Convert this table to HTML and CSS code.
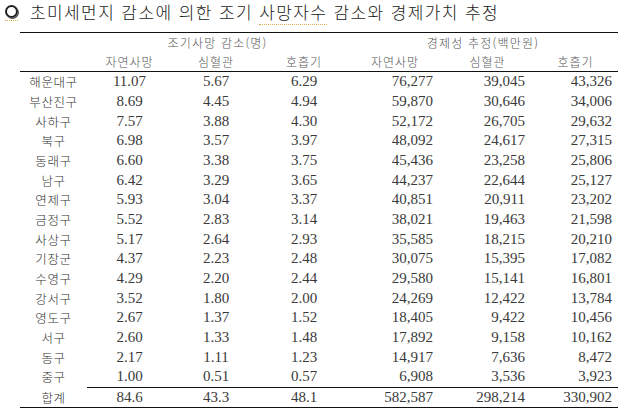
FILE: index.html
```html
<!DOCTYPE html>
<html lang="ko">
<head>
    <meta charset="UTF-8">
    <meta name="viewport" content="width=device-width, initial-scale=1.0">
    <title>초미세먼지 감소에 의한 조기 사망자수 감소와 경제가치 추정</title>
    <link rel="stylesheet" href="styles.css">
</head>
<body>
    <h1 class="title">
        <span class="bullet-wrap"><span class="bullet"></span></span>
        <span class="title-text">초미세먼지 감소에 의한 조기 <span class="spell">사망자수</span> 감소와 경제가치 추정</span>
    </h1>

    <table class="stats">
        <colgroup>
            <col class="c-name">
            <col class="c-1">
            <col class="c-2">
            <col class="c-3">
            <col class="c-4">
            <col class="c-5">
            <col class="c-6">
        </colgroup>
        <thead>
            <tr class="group">
                <th></th>
                <th colspan="3">조기사망 감소(명)</th>
                <th colspan="3">경제성 추정(백만원)</th>
            </tr>
            <tr class="sub">
                <th></th>
                <th>자연사망</th>
                <th>심혈관</th>
                <th>호흡기</th>
                <th>자연사망</th>
                <th>심혈관</th>
                <th>호흡기</th>
            </tr>
        </thead>
        <tbody>
            <tr><td>해운대구</td><td>11.07</td><td>5.67</td><td>6.29</td><td class="r4">76,277</td><td class="r5">39,045</td><td class="r6">43,326</td></tr>
            <tr><td>부산진구</td><td>8.69</td><td>4.45</td><td>4.94</td><td class="r4">59,870</td><td class="r5">30,646</td><td class="r6">34,006</td></tr>
            <tr><td>사하구</td><td>7.57</td><td>3.88</td><td>4.30</td><td class="r4">52,172</td><td class="r5">26,705</td><td class="r6">29,632</td></tr>
            <tr><td>북구</td><td>6.98</td><td>3.57</td><td>3.97</td><td class="r4">48,092</td><td class="r5">24,617</td><td class="r6">27,315</td></tr>
            <tr><td>동래구</td><td>6.60</td><td>3.38</td><td>3.75</td><td class="r4">45,436</td><td class="r5">23,258</td><td class="r6">25,806</td></tr>
            <tr><td>남구</td><td>6.42</td><td>3.29</td><td>3.65</td><td class="r4">44,237</td><td class="r5">22,644</td><td class="r6">25,127</td></tr>
            <tr><td>연제구</td><td>5.93</td><td>3.04</td><td>3.37</td><td class="r4">40,851</td><td class="r5">20,911</td><td class="r6">23,202</td></tr>
            <tr><td>금정구</td><td>5.52</td><td>2.83</td><td>3.14</td><td class="r4">38,021</td><td class="r5">19,463</td><td class="r6">21,598</td></tr>
            <tr><td>사상구</td><td>5.17</td><td>2.64</td><td>2.93</td><td class="r4">35,585</td><td class="r5">18,215</td><td class="r6">20,210</td></tr>
            <tr><td>기장군</td><td>4.37</td><td>2.23</td><td>2.48</td><td class="r4">30,075</td><td class="r5">15,395</td><td class="r6">17,082</td></tr>
            <tr><td>수영구</td><td>4.29</td><td>2.20</td><td>2.44</td><td class="r4">29,580</td><td class="r5">15,141</td><td class="r6">16,801</td></tr>
            <tr><td>강서구</td><td>3.52</td><td>1.80</td><td>2.00</td><td class="r4">24,269</td><td class="r5">12,422</td><td class="r6">13,784</td></tr>
            <tr><td>영도구</td><td>2.67</td><td>1.37</td><td>1.52</td><td class="r4">18,405</td><td class="r5">9,422</td><td class="r6">10,456</td></tr>
            <tr><td>서구</td><td>2.60</td><td>1.33</td><td>1.48</td><td class="r4">17,892</td><td class="r5">9,158</td><td class="r6">10,162</td></tr>
            <tr><td>동구</td><td>2.17</td><td>1.11</td><td>1.23</td><td class="r4">14,917</td><td class="r5">7,636</td><td class="r6">8,472</td></tr>
            <tr><td>중구</td><td>1.00</td><td>0.51</td><td>0.57</td><td class="r4">6,908</td><td class="r5">3,536</td><td class="r6">3,923</td></tr>
            <tr class="total"><td>합계</td><td>84.6</td><td>43.3</td><td>48.1</td><td class="r4">582,587</td><td class="r5">298,214</td><td class="r6">330,902</td></tr>
        </tbody>
    </table>
</body>
</html>
```

FILE: styles.css
```css
body {
    margin: 0;
    background: #fff;
    color: #222;
    font-family: "Noto Sans CJK KR", "Noto Sans", sans-serif;
}
.title {
    display: flex;
    align-items: center;
    height: 32px;
    margin: 0;
    padding-left: 5px;
    font-size: 17px;
    font-weight: 300;
    color: #1a1a1a;
    letter-spacing: 1.4px;
}
.bullet-wrap {
    display: flex;
    padding-bottom: 2px;
    margin-right: 12px;
    margin-top: -6px;
    border-bottom: 1px dotted #d9a848;
}
.bullet {
    width: 9px;
    height: 9px;
    border: 2px solid #222;
    border-radius: 50%;
    box-shadow: 1px 1px 0 #555;
}
.title-text {
    margin-top: -9px;
}
.spell {
    border-bottom: 1px dotted #d9a848;
}
.stats {
    margin-left: 20px;
    width: 598px;
    table-layout: fixed;
    border-collapse: collapse;
    border-top: 1px solid #111;
}
.c-name { width: 67px; }
.c-1 { width: 85px; }
.c-2 { width: 88px; }
.c-3 { width: 88px; }
.c-4 { width: 94px; }
.c-5 { width: 91px; }
.c-6 { width: 85px; }
th {
    height: 19px;
    padding: 0;
    font-weight: 300;
    font-size: 12px;
    color: #555;
    text-align: center;
    letter-spacing: 1px;
}
.group th {
    letter-spacing: 1.2px;
}
.sub th {
    border-bottom: 1px solid #111;
}
td {
    height: 19.67px;
    padding: 0;
    text-align: center;
    font-family: "Liberation Serif", serif;
    font-size: 15px;
    color: #3a3a3a;
    line-height: 19px;
}
td:first-child {
    font-family: "Noto Sans CJK KR", sans-serif;
    font-weight: 300;
    font-size: 12.5px;
    letter-spacing: 0.6px;
    color: #333;
}
.r4, .r5, .r6 {
    text-align: right;
}
.r4 { padding-right: 9px; }
.r5 { padding-right: 8px; }
.r6 { padding-right: 6px; }
.total td {
    height: 19.5px;
    border-bottom: 1px solid #111;
}
.total td + td {
    border-top: 1px solid #111;
}
```
